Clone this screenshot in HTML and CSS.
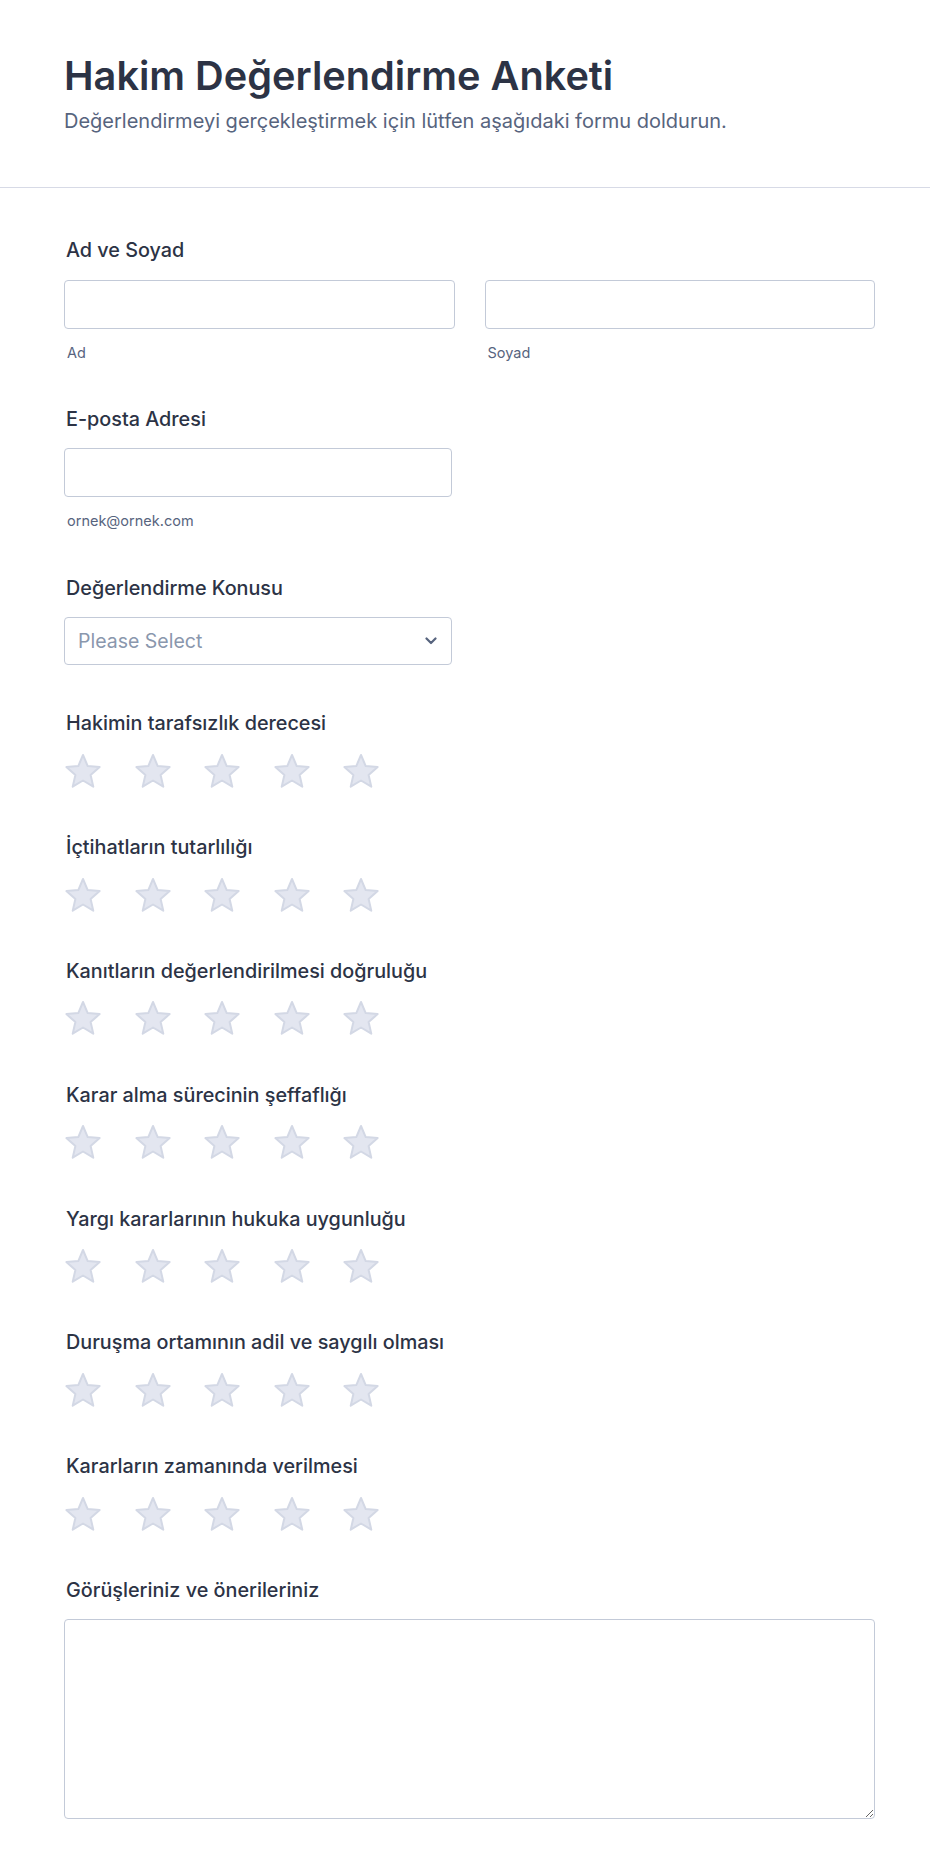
FILE: index.html
```html
<!DOCTYPE html>
<html lang="tr">
<head>
<meta charset="utf-8">
<title>Hakim Değerlendirme Anketi</title>
<link rel="stylesheet" href="styles.css">
</head>
<body>
<header class="header">
  <h1 class="title">Hakim Değerlendirme Anketi</h1>
  <p class="subtitle">Değerlendirmeyi gerçekleştirmek için lütfen aşağıdaki formu doldurun.</p>
</header>
<form class="form">
  <div class="field">
    <label class="label">Ad ve Soyad</label>
    <div class="name-row">
      <div class="name-col">
        <input class="input" type="text">
        <span class="sublabel">Ad</span>
      </div>
      <div class="name-col">
        <input class="input" type="text">
        <span class="sublabel">Soyad</span>
      </div>
    </div>
  </div>

  <div class="field">
    <label class="label">E-posta Adresi</label>
    <div class="half">
      <input class="input" type="email">
      <span class="sublabel">ornek@ornek.com</span>
    </div>
  </div>

  <div class="field">
    <label class="label">Değerlendirme Konusu</label>
    <div class="select half">
      <span class="placeholder">Please Select</span>
      <svg class="chevron" width="12" height="8" viewBox="0 0 12 8"><path d="M1.5 1.5 L6 6 L10.5 1.5" fill="none" stroke="#57647e" stroke-width="2.2" stroke-linecap="round" stroke-linejoin="round"/></svg>
    </div>
  </div>

  <div class="field rating" data-label="Hakimin tarafsızlık derecesi"></div>
</form>
<script src="script.js"></script>
</body>
</html>
```
FILE: script.js
```js
(function () {
  var labels = [
    "Hakimin tarafsızlık derecesi",
    "İçtihatların tutarlılığı",
    "Kanıtların değerlendirilmesi doğruluğu",
    "Karar alma sürecinin şeffaflığı",
    "Yargı kararlarının hukuka uygunluğu",
    "Duruşma ortamının adil ve saygılı olması",
    "Kararların zamanında verilmesi"
  ];
  var star = '<svg class="star" width="38" height="36" viewBox="0 0 38 36"><polygon points="19,2 23.7,13.03 35.64,14.09 26.61,21.97 29.29,33.66 19,27.5 8.71,33.66 11.39,21.97 2.36,14.09 14.3,13.03" fill="#e3e6f0" stroke="#d3d8e5" stroke-width="2" stroke-linejoin="round"/></svg>';
  var anchor = document.querySelector('.rating');
  var html = '';
  labels.forEach(function (l) {
    html += '<div class="field"><label class="label">' + l + '</label><div class="stars">' + star + star + star + star + star + '</div></div>';
  });
  html += '<div class="field"><label class="label">Görüşleriniz ve önerileriniz</label><textarea class="textarea"></textarea></div>';
  anchor.insertAdjacentHTML('afterend', html);
  anchor.parentNode.removeChild(anchor);
})();
```
FILE: styles.css
```css
* { box-sizing: border-box; }
body {
  margin: 0;
  background: #fff;
  font-family: Inter, "Noto Sans", sans-serif;
  color: #2c3345;
}
.header {
  padding: 52px 64px 54px;
  border-bottom: 1px solid #d7dae6;
}
.title {
  margin: 0;
  font-size: 39.7px;
  line-height: 48px;
  font-weight: 600;
  color: #2c3345;
}
.subtitle {
  margin: 9px 0 0;
  font-size: 20px;
  line-height: 24px;
  color: #57647e;
}
.form {
  width: 875px;
  padding: 50px 0 40px 64px;
}
.field {
  margin-bottom: 46.3px;
}
.label {
  display: block;
  font-size: 19.8px;
  line-height: 24px;
  font-weight: 500;
  margin-bottom: 17.5px;
  padding-left: 2px;
}
.name-row {
  display: flex;
  gap: 30px;
}
.name-col {
  flex: 1;
}
.half {
  width: 388px;
}
.input {
  display: block;
  width: 100%;
  height: 49px;
  border: 1px solid #c3cad8;
  border-radius: 4px;
  font: inherit;
  background: #fff;
}
.sublabel {
  display: block;
  margin-top: 16px;
  font-size: 14.5px;
  line-height: 16px;
  color: #57647e;
  padding-left: 3px;
}
.select {
  height: 48px;
  border: 1px solid #c3cad8;
  border-radius: 4px;
  display: flex;
  align-items: center;
  justify-content: space-between;
  padding: 0 14px 0 13px;
}
.placeholder {
  font-size: 19.5px;
  color: #8a97ad;
}
.stars {
  display: flex;
  gap: 31.5px;
  height: 36px;
}
.star { display: block; }
.textarea {
  display: block;
  width: 100%;
  height: 200px;
  border: 1px solid #c3cad8;
  border-radius: 4px;
  font: inherit;
}
```
